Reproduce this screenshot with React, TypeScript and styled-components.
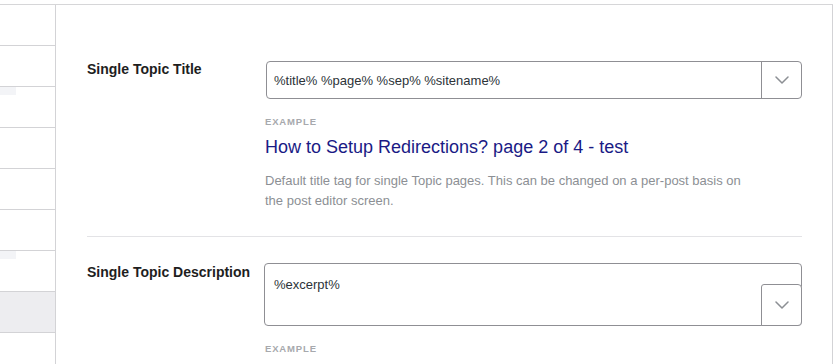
import { createGlobalStyle, styled } from "styled-components";

const GlobalStyle = createGlobalStyle`
  html, body {
    margin: 0;
    padding: 0;
    background: #ffffff;
    font-family: "Liberation Sans", Arial, sans-serif;
    color: #1e1e1e;
  }
`;

const Frame = styled.div`
  margin-top: 4px;
  width: 833px;
  height: 360px;
  border-top: 1px solid #d6d6d8;
  display: flex;
  overflow: hidden;
  box-sizing: border-box;
`;

const Sidebar = styled.div`
  width: 55px;
  border-right: 1px solid #d3d3d6;
  display: flex;
  flex-direction: column;
  flex-shrink: 0;
`;

const SideItem = styled.div<{ $active?: boolean }>`
  height: 40px;
  flex-shrink: 0;
  border-bottom: 1px solid #d3d3d6;
  background: ${(p) => (p.$active ? "#ededf0" : "#ffffff")};
`;

const Ghost = styled.div`
  width: 16px;
  height: 8px;
  background: #f3f4f7;
`;

const Main = styled.div`
  flex: 1;
  border-right: 1px solid #d3d3d6;
  padding: 28px 30px 0 31px;
`;

const Row = styled.div<{ $divider?: boolean; $top: number }>`
  display: grid;
  grid-template-columns: 178px 1fr;
  padding: ${(p) => p.$top}px 0 25px;
  border-bottom: ${(p) => (p.$divider ? "1px solid #e3e3e6" : "none")};
`;

const Label = styled.div`
  font-size: 14px;
  font-weight: 700;
  color: #1e1e1e;
  line-height: 16px;
`;

const Field = styled.div`
  display: flex;
  flex-direction: column;
`;

const Select = styled.div`
  height: 38px;
  border: 1px solid #8f8f94;
  border-radius: 4px;
  display: flex;
  align-items: stretch;
  box-sizing: border-box;
  margin-left: 1px;
`;

const SelectValue = styled.div`
  flex: 1;
  display: flex;
  align-items: center;
  padding-left: 7px;
  font-size: 13px;
  color: #2c3338;
`;

const Toggle = styled.div`
  width: 39px;
  border-left: 1px solid #8f8f94;
  display: flex;
  align-items: center;
  justify-content: center;
`;

const TextArea = styled.div`
  position: relative;
  height: 63px;
  border: 1px solid #8f8f94;
  border-radius: 4px;
  box-sizing: border-box;
  padding: 13px 9px;
  font-size: 13px;
  color: #2c3338;
  margin-left: -1px;
  margin-top: -1px;
`;

const CornerToggle = styled.div`
  position: absolute;
  right: -1px;
  bottom: -1px;
  width: 41px;
  height: 42px;
  box-sizing: border-box;
  border: 1px solid #8f8f94;
  border-radius: 3px 4px 4px 0;
  background: #ffffff;
  display: flex;
  align-items: center;
  justify-content: center;
`;

const Caption = styled.div`
  margin-top: 17px;
  font-size: 9.5px;
  font-weight: 700;
  letter-spacing: 0.85px;
  color: #a7a9ad;
  line-height: 12px;
`;

const Preview = styled.div`
  margin-top: 7px;
  font-size: 18px;
  color: #1a1a85;
  line-height: 24px;
`;

const Help = styled.p`
  margin: 12px 0 0;
  max-width: 490px;
  font-size: 13px;
  line-height: 20px;
  color: #8c8f94;
`;

const Chevron = () => (
  <svg width="14" height="8" viewBox="0 0 14 8" fill="none">
    <path d="M1 1l6 6 6-6" stroke="#8c8f94" strokeWidth="1.5" strokeLinecap="round" strokeLinejoin="round" />
  </svg>
);

export default function App() {
  return (
    <>
      <GlobalStyle />
      <Frame>
        <Sidebar>
          {Array.from({ length: 9 }).map((_, i) => (
            <SideItem key={i} $active={i === 7}>
              {(i === 2 || i === 6) && <Ghost />}
            </SideItem>
          ))}
        </Sidebar>
        <Main>
          <Row $divider $top={28}>
            <Label>Single Topic Title</Label>
            <Field>
              <Select>
                <SelectValue>%title% %page% %sep% %sitename%</SelectValue>
                <Toggle>
                  <Chevron />
                </Toggle>
              </Select>
              <Caption>EXAMPLE</Caption>
              <Preview>How to Setup Redirections? page 2 of 4 - test</Preview>
              <Help>
                Default title tag for single Topic pages. This can be changed on a per-post basis on the post editor screen.
              </Help>
            </Field>
          </Row>
          <Row $top={27}>
            <Label>Single Topic Description</Label>
            <Field>
              <TextArea>
                %excerpt%
                <CornerToggle>
                  <Chevron />
                </CornerToggle>
              </TextArea>
              <Caption>EXAMPLE</Caption>
            </Field>
          </Row>
        </Main>
      </Frame>
    </>
  );
}
